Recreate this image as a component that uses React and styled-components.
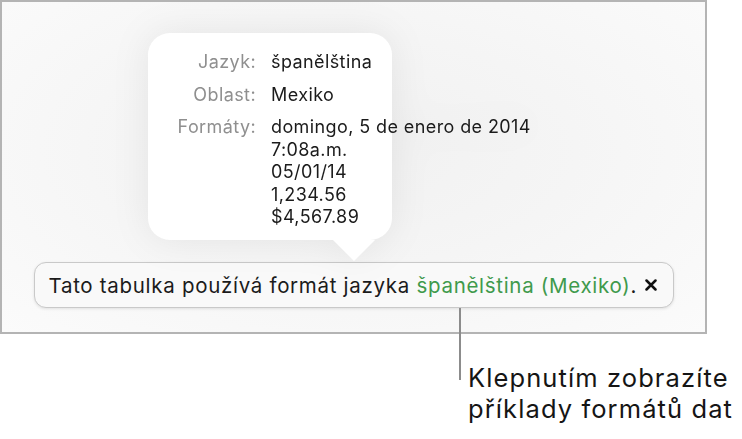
import styled, { createGlobalStyle } from "styled-components";

const GlobalStyle = createGlobalStyle`
  html, body {
    margin: 0;
    padding: 0;
    background: #ffffff;
  }
  body {
    font-family: Inter, Roboto, "Liberation Sans", sans-serif;
    color: #1b1b1b;
  }
`;

const rows = [
  { label: "Jazyk:", values: ["španělština"] },
  { label: "Oblast:", values: ["Mexiko"] },
  {
    label: "Formáty:",
    values: [
      "domingo, 5 de enero de 2014",
      "7:08a.m.",
      "05/01/14",
      "1,234.56",
      "$4,567.89",
    ],
  },
];

const App = () => {
  return (
    <Page>
      <GlobalStyle />
      <Frame>
        <Popover>
          <Card>
            {rows.map(r => (
              <Row key={r.label}>
                <Label>{r.label}</Label>
                <Values>
                  {r.values.map(v => (
                    <span key={v}>{v}</span>
                  ))}
                </Values>
              </Row>
            ))}
          </Card>
          <Arrow />
        </Popover>
        <Banner>
          <BannerText>
            Tato tabulka používá formát jazyka{" "}
            <Link>španělština (Mexiko)</Link>.
          </BannerText>
          <Close>
            <svg width="12" height="12" viewBox="0 0 12 12">
              <path
                d="M1.5 1.5 L10.5 10.5 M10.5 1.5 L1.5 10.5"
                stroke="#111"
                strokeWidth="2.5"
                strokeLinecap="round"
              />
            </svg>
          </Close>
        </Banner>
      </Frame>
      <Callout>
        <Leader />
        <Caption>
          Klepnutím zobrazíte
          <br />
          příklady formátů dat
        </Caption>
      </Callout>
    </Page>
  );
};

export default App;

const Page = styled.div`
  width: 742px;
  height: 439px;
  overflow: hidden;
  display: flex;
  flex-direction: column;
`;

const Frame = styled.div`
  width: 707px;
  height: 334px;
  box-sizing: border-box;
  border: 2px solid #b4b4b4;
  background: radial-gradient(
    ellipse at 50% 45%,
    #f1f1f1 0%,
    #f5f5f5 45%,
    #fbfbfb 100%
  );
  display: flex;
  flex-direction: column;
  padding-top: 31px;
`;

const Popover = styled.div`
  display: flex;
  flex-direction: column;
  margin-left: 146px;
  filter: drop-shadow(0 0 18px rgba(0, 0, 0, 0.07));
`;

const Card = styled.div`
  width: 244px;
  height: 207px;
  box-sizing: border-box;
  background: #ffffff;
  border-radius: 22px;
  padding: 18px 0 0 0;
  display: flex;
  flex-direction: column;
  gap: 10px;
`;

const Arrow = styled.div`
  width: 42px;
  height: 21px;
  margin-left: 185px;
  background: #ffffff;
  clip-path: polygon(0 0, 100% 0, 50% 100%);
`;

const Row = styled.div`
  display: flex;
  align-items: flex-start;
  font-size: 18px;
  line-height: 22.5px;
  letter-spacing: 0.4px;
`;

const Label = styled.div`
  width: 108px;
  text-align: right;
  color: #8f8f8f;
  flex-shrink: 0;
`;

const Values = styled.div`
  margin-left: 15px;
  display: flex;
  flex-direction: column;
  color: #1b1b1b;
  white-space: nowrap;
`;

const Banner = styled.div`
  align-self: center;
  margin-top: 1px;
  width: 640px;
  height: 46px;
  box-sizing: border-box;
  border: 1px solid #c9c9c9;
  border-radius: 12px;
  background: #f9f9f9;
  box-shadow: 0 1px 3px rgba(0, 0, 0, 0.1);
  display: flex;
  align-items: center;
  padding: 0 16px 0 14px;
`;

const BannerText = styled.div`
  flex: 1;
  font-size: 20.5px;
  letter-spacing: 0.7px;
  color: #1b1b1b;
  white-space: nowrap;
`;

const Link = styled.span`
  color: #3f9a4c;
`;

const Close = styled.div`
  width: 12px;
  height: 12px;
  display: flex;
`;

const Callout = styled.div`
  display: flex;
  align-items: flex-start;
  margin-top: -26px;
  padding-left: 459px;
`;

const Leader = styled.div`
  width: 2px;
  height: 72px;
  background: #8c8c8c;
  flex-shrink: 0;
`;

const Caption = styled.div`
  margin-left: 7px;
  margin-top: 54px;
  font-size: 25.5px;
  line-height: 31px;
  letter-spacing: 1.1px;
  color: #151515;
  white-space: nowrap;
`;
